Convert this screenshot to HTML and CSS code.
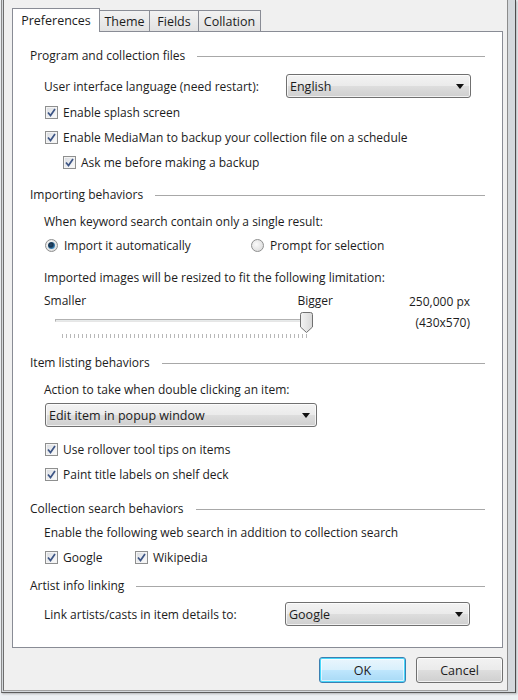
FILE: index.html
```html
<!DOCTYPE html>
<html>
<head>
<meta charset="utf-8">
<link rel="stylesheet" href="styles.css">
</head>
<body>
<div class="frame">
  <div class="window">
    <div class="tabs">
      <div class="tab active">Preferences</div>
      <div class="tab">Theme</div>
      <div class="tab">Fields</div>
      <div class="tab">Collation</div>
    </div>
    <div class="panel">
      <div class="title t1"><span>Program and collection files</span><i class="rule"></i></div>
      <div class="combo-row c1">
        <span class="combo-label">User interface language (need restart):</span>
        <div class="combo short"><span>English</span><svg class="arrow" width="8" height="5" viewBox="0 0 8 5"><path d="M0 0H8L4 5Z" fill="#111"/></svg></div>
      </div>
      <div class="row r-first"><span class="cb"><svg width="13" height="13" viewBox="0 0 13 13"><path d="M3 6.5L5.5 9.5L10 3" fill="none" stroke="#3d5585" stroke-width="1.7"/></svg></span>Enable splash screen</div>
      <div class="row"><span class="cb"><svg width="13" height="13" viewBox="0 0 13 13"><path d="M3 6.5L5.5 9.5L10 3" fill="none" stroke="#3d5585" stroke-width="1.7"/></svg></span>Enable MediaMan to backup your collection file on a schedule</div>
      <div class="row sub"><span class="cb"><svg width="13" height="13" viewBox="0 0 13 13"><path d="M3 6.5L5.5 9.5L10 3" fill="none" stroke="#3d5585" stroke-width="1.7"/></svg></span>Ask me before making a backup</div>

      <div class="title t2"><span>Importing behaviors</span><i class="rule"></i></div>
      <div class="text tx1">When keyword search contain only a single result:</div>
      <div class="radios">
        <div class="radio-item"><span class="rb on"></span>Import it automatically</div>
        <div class="radio-item"><span class="rb"></span>Prompt for selection</div>
      </div>
      <div class="text tx2">Imported images will be resized to fit the following limitation:</div>
      <div class="slider-block">
        <div class="slider-labels"><span>Smaller</span><span>Bigger</span></div>
        <div class="val v1">250,000 px</div>
        <div class="slider">
          <div class="track"></div>
          <div class="ticks"></div>
          <svg class="thumb" width="13" height="21" viewBox="0 0 13 21"><defs><linearGradient id="tg" x1="0" y1="0" x2="1" y2="0"><stop offset="0" stop-color="#f4f4f4"/><stop offset="1" stop-color="#d8d8d8"/></linearGradient></defs><path d="M0.5 2.5Q0.5 0.5 2.5 0.5H10.5Q12.5 0.5 12.5 2.5V15L6.5 20.5L0.5 15Z" fill="url(#tg)" stroke="#707070"/></svg>
        </div>
        <div class="val v2">(430x570)</div>
      </div>

      <div class="title t3"><span>Item listing behaviors</span><i class="rule"></i></div>
      <div class="text tx3">Action to take when double clicking an item:</div>
      <div class="combo wide"><span>Edit item in popup window</span><svg class="arrow" width="8" height="5" viewBox="0 0 8 5"><path d="M0 0H8L4 5Z" fill="#111"/></svg></div>
      <div class="row r-after-combo"><span class="cb"><svg width="13" height="13" viewBox="0 0 13 13"><path d="M3 6.5L5.5 9.5L10 3" fill="none" stroke="#3d5585" stroke-width="1.7"/></svg></span>Use rollover tool tips on items</div>
      <div class="row"><span class="cb"><svg width="13" height="13" viewBox="0 0 13 13"><path d="M3 6.5L5.5 9.5L10 3" fill="none" stroke="#3d5585" stroke-width="1.7"/></svg></span>Paint title labels on shelf deck</div>

      <div class="title t4"><span>Collection search behaviors</span><i class="rule"></i></div>
      <div class="text tx4">Enable the following web search in addition to collection search</div>
      <div class="checks">
        <div class="row check-item"><span class="cb"><svg width="13" height="13" viewBox="0 0 13 13"><path d="M3 6.5L5.5 9.5L10 3" fill="none" stroke="#3d5585" stroke-width="1.7"/></svg></span>Google</div>
        <div class="row check-item"><span class="cb"><svg width="13" height="13" viewBox="0 0 13 13"><path d="M3 6.5L5.5 9.5L10 3" fill="none" stroke="#3d5585" stroke-width="1.7"/></svg></span>Wikipedia</div>
      </div>

      <div class="title t5"><span>Artist info linking</span><i class="rule"></i></div>
      <div class="combo-row c2">
        <span class="combo-label">Link artists/casts in item details to:</span>
        <div class="combo short2"><span>Google</span><svg class="arrow" width="8" height="5" viewBox="0 0 8 5"><path d="M0 0H8L4 5Z" fill="#111"/></svg></div>
      </div>
    </div>
    <div class="footer">
      <button class="btn default">OK</button>
      <button class="btn">Cancel</button>
    </div>
  </div>
</div>
</body>
</html>
```
FILE: styles.css
```css
* { box-sizing: border-box; }
html, body { margin: 0; padding: 0; }
body {
  background: #edf0f3;
  font-family: "Open Sans", "Noto Sans", sans-serif;
  font-size: 12px;
  color: #1c1c1c;
  width: 518px;
  height: 700px;
  overflow: hidden;
}
.frame {
  width: 515px;
  height: 693px;
  background: #d4d8dc;
  border-left: 1px solid #8a8a8a;
  border-right: 1px solid #4d4d4d;
  border-bottom: 1px solid #5c5c5c;
  margin-left: 1px;
  padding: 0 7px 0 1px;
  box-shadow: 1px 1px 2px rgba(0,0,0,0.25);
}
.window {
  height: 691px;
  background: #f0f0f0;
  border-left: 1px solid #6e6e6e;
  border-right: 1px solid #8c8c8c;
  border-bottom: 1px solid #a0a0a0;
  padding: 8px 1px 0 8px;
}
.tabs {
  display: flex;
  align-items: flex-end;
  height: 23px;
  position: relative;
  z-index: 2;
}
.tab {
  height: 21px;
  padding: 0 4px;
  border: 1px solid #898c95;
  border-bottom: none;
  border-left: none;
  background: linear-gradient(#f2f2f2, #e2e2e2);
  display: flex;
  align-items: center;
  justify-content: center;
  font-size: 12.5px;
}
.tab:nth-child(2) { width: 50px; }
.tab:nth-child(3) { width: 49px; }
.tab:nth-child(4) { width: 62px; }
.tab.active {
  width: 88px;
  height: 24px;
  border-left: 1px solid #898c95;
  background: #fff;
  margin-bottom: -1px;
  padding-top: 0;
}
.panel {
  width: 491px;
  height: 617px;
  background: #fff;
  border: 1px solid #898c95;
  padding: 0 17px;
  display: flex;
  flex-direction: column;
}
.title {
  height: 20px;
  display: flex;
  align-items: center;
  gap: 12px;
}
.rule {
  flex: 1;
  height: 2px;
  border-top: 1px solid #a8a8a8;
  border-bottom: 1px solid #fff;
  margin-top: 4px;
}
.t1 { margin-top: 13px; }
.t2 { margin-top: 9px; }
.t3 { margin-top: 13px; }
.t4 { margin-top: 11px; }
.t5 { margin-top: 5px; }

.combo-row {
  height: 24px;
  display: flex;
  align-items: center;
  padding-left: 14px;
}
.c1 { margin-top: 9px; }
.c2 { margin-top: 7px; }
.combo-label { width: 242px; flex: none; }
.combo {
  height: 24px;
  border: 1px solid #707070;
  border-radius: 3px;
  background: linear-gradient(#f3f3f3 0%, #ebebeb 48%, #dddddd 52%, #cfcfcf 100%);
  box-shadow: inset 0 0 0 1px rgba(255,255,255,0.7);
  display: flex;
  align-items: center;
  justify-content: space-between;
  padding: 0 6px 0 3px;
  font-size: 12.5px;
}
.combo .arrow { margin-top: 1px; }
.combo.short { width: 185px; }
.combo.short2 { width: 185px; margin-left: -1px; }
.combo.wide { width: 272px; margin-left: 15px; margin-top: 2px; flex: none; }

.row {
  height: 25px;
  display: flex;
  align-items: center;
  padding-left: 15px;
}
.row.sub { padding-left: 33px; }
.r-first { margin-top: 2px; }
.r-after-combo { margin-top: 10px; }
.cb {
  width: 13px;
  height: 13px;
  border: 1px solid #8e8f8f;
  background: linear-gradient(135deg, #d8dbe0, #fdfdfd);
  box-shadow: inset 0 0 0 1px #f4f4f4;
  margin-right: 5px;
  flex: none;
  display: block;
  position: relative;
}
.cb svg { position: absolute; left: -1px; top: -1px; }

.text {
  height: 24px;
  display: flex;
  align-items: center;
  padding-left: 14px;
}
.tx1 { margin-top: 5px; }
.tx2 { margin-top: 8px; }
.tx3 { margin-top: 5px; }
.tx4 { margin-top: 2px; }

.radios {
  height: 24px;
  display: grid;
  grid-template-columns: 206px auto;
  padding-left: 15px;
}
.radio-item { display: flex; align-items: center; }
.rb {
  width: 13px;
  height: 13px;
  border-radius: 50%;
  border: 1px solid #8e8f8f;
  background: radial-gradient(circle at 40% 40%, #fafafa, #d6d6d6);
  margin-right: 6px;
  flex: none;
  position: relative;
}
.rb.on::after {
  content: "";
  position: absolute;
  left: 2px;
  top: 2px;
  width: 7px;
  height: 7px;
  border-radius: 50%;
  background: radial-gradient(circle at 40% 40%, #2a4d6e 0%, #17324d 35%, #3e8ac1 70%, #9fd0f0 100%);
}

.slider-block {
  display: grid;
  grid-template-columns: 289px 1fr;
  grid-template-rows: 22px 22px;
  padding-left: 14px;
  padding-right: 15px;
  height: 50px;
}
.slider-labels {
  display: flex;
  justify-content: space-between;
  align-items: center;
}
.val { text-align: right; display: flex; align-items: center; justify-content: flex-end; }
.v1 { padding-top: 3px; }
.slider { position: relative; }
.track {
  position: absolute;
  left: 11px;
  top: 8px;
  width: 248px;
  height: 3px;
  border: 1px solid #b2b2b2;
  border-bottom-color: #e6e6e6;
  background: #e7eaea;
}
.thumb { position: absolute; left: 256px; top: 1px; }
.ticks {
  position: absolute;
  left: 18px;
  top: 23px;
  width: 246px;
  height: 4px;
  background: repeating-linear-gradient(90deg, #b8b8b8 0 1px, transparent 1px 4px);
}

.checks {
  display: grid;
  grid-template-columns: 105px auto;
  margin-top: 1px;
}
.check-item { padding-left: 15px; }
.check-item + .check-item { padding-left: 0; }

.footer {
  display: flex;
  justify-content: flex-end;
  gap: 10px;
  padding-top: 9px;
  width: 491px;
}
.btn {
  width: 87px;
  height: 26px;
  border: 1px solid #707070;
  border-radius: 3px;
  background: linear-gradient(#f2f2f2 0%, #ebebeb 48%, #dddddd 52%, #cfcfcf 100%);
  box-shadow: inset 0 0 0 1px rgba(255,255,255,0.75);
  font-family: "Open Sans", "Noto Sans", sans-serif;
  font-size: 12.5px;
  color: #1c1c1c;
  padding: 0;
}
.btn.default {
  border-color: #3c7fb1;
  box-shadow: inset 0 0 0 1px #48d8fb, inset 0 0 0 2px rgba(255,255,255,0.6);
  background: linear-gradient(#eaf6fd 0%, #d9f0fc 48%, #bee6fd 52%, #a7d9f5 100%);
}
```
